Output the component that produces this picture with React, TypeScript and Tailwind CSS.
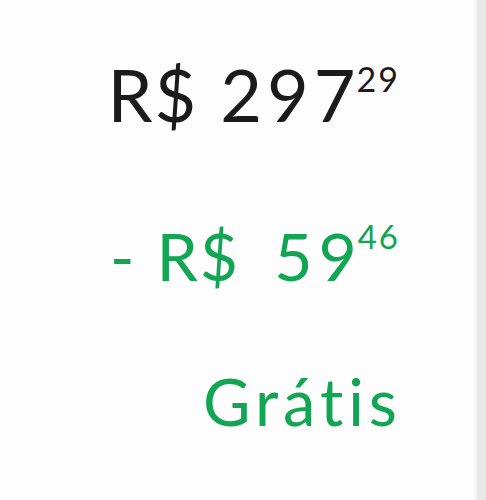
export default function App() {
  return (
    <div className="flex h-[500px] w-[486px] bg-[#fdfdfd]" style={{ fontFamily: "Lato, sans-serif", fontVariantLigatures: "none" }}>
      <div className="flex flex-1 flex-col items-end pr-[73px]">
        <div className="mt-[58px] flex items-start leading-none text-[#1b1b1b]">
          <span className="text-[72px] leading-none tracking-[2px]">R$</span>
          <span className="ml-[22px] text-[72px] leading-none">
            <span className="tracking-[5px]">29</span>7
          </span>
          <span className="mt-[4px] ml-[1px] text-[34px] leading-none tracking-[2px]">29</span>
        </div>
        <div className="mt-[93px] flex items-start leading-none text-[#11a554]">
          <span className="text-[66px] leading-none">-</span>
          <span className="ml-[22px] text-[66px] leading-none tracking-[2px]">R$</span>
          <span className="ml-[34px] text-[66px] leading-none">
            <span className="tracking-[6px]">5</span>9
          </span>
          <span className="mt-[-3px] ml-[1px] text-[33px] leading-none tracking-[2px]">46</span>
        </div>
        <div className="mt-[80px] mr-[-2px] text-[65px] leading-none tracking-[5px] text-[#11a554]">Grátis</div>
      </div>
      <div className="w-[4px] bg-gradient-to-r from-[#fdfdfd] to-[#f0f0f0]" />
      <div className="w-[9px] bg-[#e8e8e8]" />
    </div>
  );
}
